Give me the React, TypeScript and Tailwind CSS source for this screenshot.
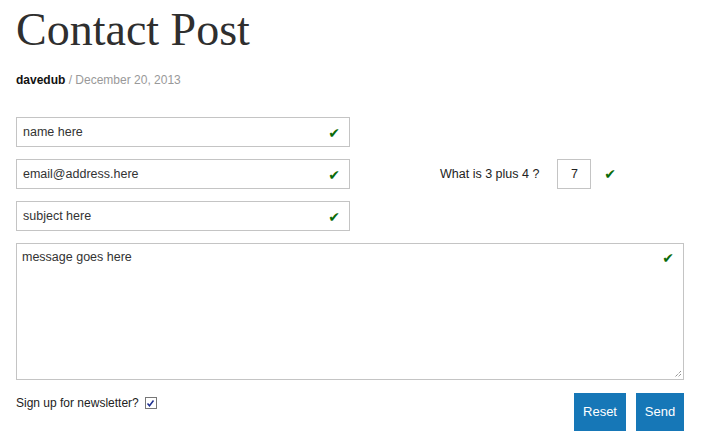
import React from "react";

function Check({ className = "" }: { className?: string }) {
  return (
    <span className={"text-[#0a6b0a] text-[14px] leading-none select-none " + className} style={{ fontFamily: '"DejaVu Sans", sans-serif' }}>
      ✔
    </span>
  );
}

function Field({ value }: { value: string }) {
  return (
    <div className="flex items-center justify-between w-[334px] h-[30px] border border-[#c4c4c4] bg-white pl-[6px] pr-[9px] pt-[1px]">
      <span className="text-[12.5px] text-[#333]">{value}</span>
      <Check />
    </div>
  );
}

export default function App() {
  return (
    <div className="w-[701px] h-[445px] bg-white px-4 pt-[7px]" style={{ fontFamily: '"Liberation Sans", Arial, sans-serif' }}>
      {/* Title */}
      <h1 className="text-[46px] leading-none text-[#2f2f2f]" style={{ fontFamily: '"Liberation Serif", Georgia, serif' }}>
        Contact Post
      </h1>
      <div className="mt-[21px] text-[12px] leading-none">
        <span className="font-bold text-[#111]">davedub</span>
        <span className="text-[#999]"> / December 20, 2013</span>
      </div>

      {/* Form */}
      <div className="mt-[31px] flex flex-col gap-3">
        <Field value="name here" />
        <div className="flex items-center">
          <Field value="email@address.here" />
          <span className="ml-[90px] text-[12.5px] text-[#222]">What is 3 plus 4 ?</span>
          <div className="ml-[18px] w-[34px] h-[30px] border border-[#c4c4c4] flex items-center justify-center text-[12.5px] text-[#222]">
            7
          </div>
          <Check className="ml-[13px]" />
        </div>
        <Field value="subject here" />
        <div className="relative w-[668px] h-[137px] border border-[#c4c4c4] pl-[5px] pt-[6px] text-[12.5px] leading-[14px]">
          <span className="text-[#333]">message goes here</span>
          <Check className="absolute right-[9px] top-[7px]" />
          <svg className="absolute right-[1px] bottom-[1px]" width="9" height="9" viewBox="0 0 9 9">
            <path d="M8 2 L2 8 M8 5 L5 8" stroke="#666" strokeWidth="1" strokeDasharray="1 1" />
          </svg>
        </div>
      </div>

      {/* Footer row */}
      <div className="mt-[13px] flex items-start justify-between w-[668px]">
        <div className="flex items-center mt-[1px]">
          <span className="text-[12px] text-[#222]">Sign up for newsletter?</span>
          <span className="ml-[6px] w-[12px] h-[12px] border border-[#777] bg-white flex items-center justify-center">
            <svg width="9" height="9" viewBox="0 0 9 9">
              <path d="M1.5 4.5 L3.5 6.8 L7.5 1.5" stroke="#1f2f8f" strokeWidth="1.5" fill="none" />
            </svg>
          </span>
        </div>
        <div className="flex gap-[10px]">
          <button className="w-[52px] h-[38px] bg-[#1677b7] text-white text-[13px]">Reset</button>
          <button className="w-[48px] h-[38px] bg-[#1677b7] text-white text-[13px]">Send</button>
        </div>
      </div>
    </div>
  );
}
